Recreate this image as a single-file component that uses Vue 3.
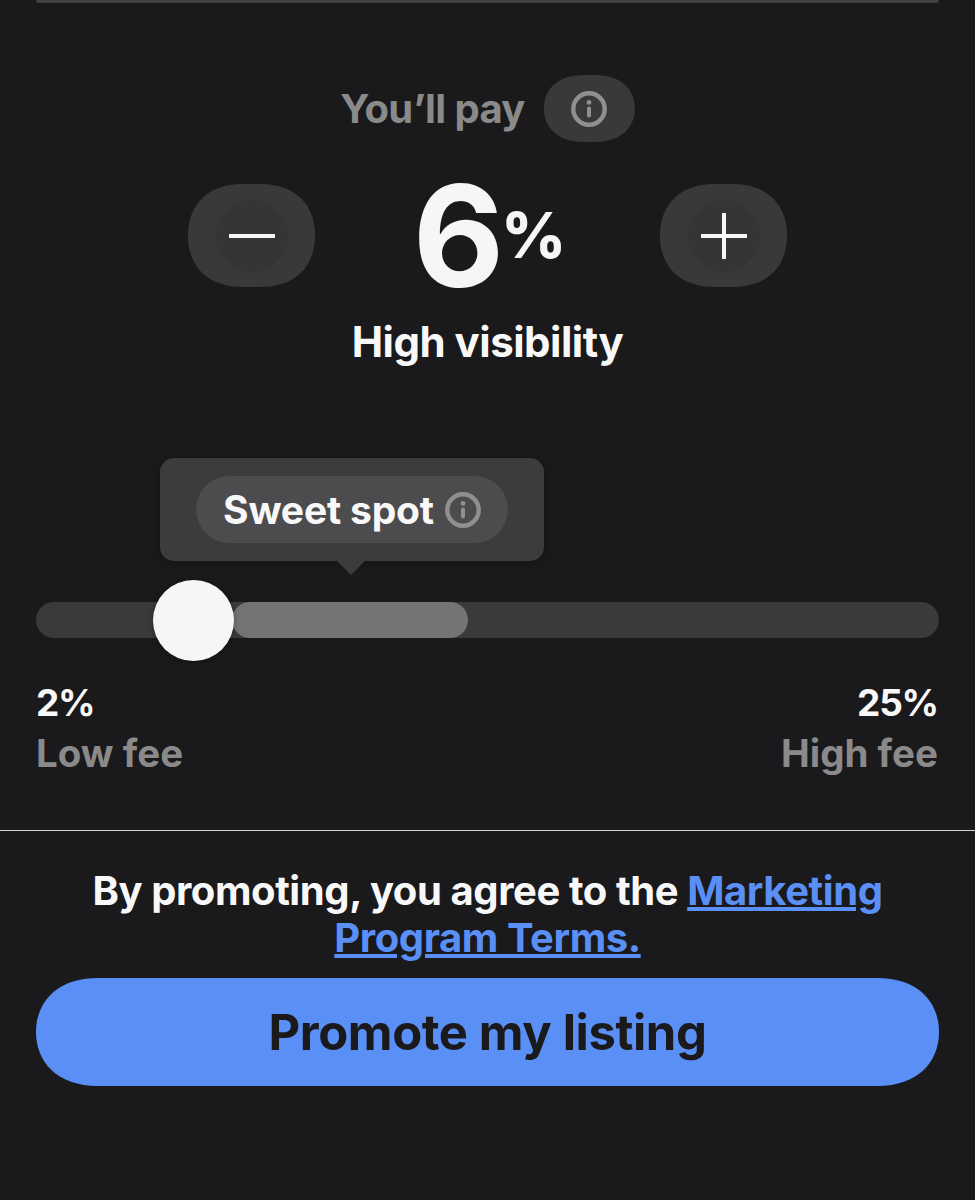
<script setup>
</script>

<template>
  <div class="page">
    <div class="sliver"></div>
    <div class="pay-row">
      <span class="pay-label">You’ll pay</span>
      <span class="info-pill">
        <svg class="info-lg" viewBox="0 0 36 36"><circle cx="18" cy="18" r="15.7" fill="none" stroke="#909090" stroke-width="4.4"/><circle cx="18" cy="11.4" r="2.4" fill="#909090"/><rect x="16" y="15.5" width="4" height="11" rx="2" fill="#909090"/></svg>
      </span>
    </div>
    <div class="stepper">
      <button class="step">
        <span class="step-in">
          <svg viewBox="0 0 46 46" class="step-icon"><path d="M1 23H45" stroke="#f6f6f6" stroke-width="4" stroke-linecap="round"/></svg>
        </span>
      </button>
      <div class="value"><span class="num">6</span><span class="pct">%</span></div>
      <button class="step">
        <span class="step-in">
          <svg viewBox="0 0 46 46" class="step-icon"><path d="M1 23H45M23 1V45" stroke="#f6f6f6" stroke-width="4" stroke-linecap="round"/></svg>
        </span>
      </button>
    </div>
    <div class="visibility">High visibility</div>
    <div class="slider">
      <div class="tooltip">
        <div class="tip-pill">
          <span>Sweet spot</span>
          <svg class="info-sm" viewBox="0 0 36 36"><circle cx="18" cy="18" r="15.7" fill="none" stroke="#909090" stroke-width="4.4"/><circle cx="18" cy="11.4" r="2.4" fill="#909090"/><rect x="16" y="15.5" width="4" height="11" rx="2" fill="#909090"/></svg>
        </div>
        <span class="tip-arrow"></span>
      </div>
      <div class="track">
        <div class="sweet"></div>
        <div class="thumb"></div>
      </div>
    </div>
    <div class="ends">
      <div>
        <div class="end-val">2%</div>
        <div class="end-lab">Low fee</div>
      </div>
      <div class="right">
        <div class="end-val">25%</div>
        <div class="end-lab">High fee</div>
      </div>
    </div>
    <footer class="footer">
      <p class="terms">By promoting, you agree to the <a class="link">Marketing Program Terms.</a></p>
      <button class="cta">Promote my listing</button>
    </footer>
  </div>
</template>

<style>
html, body { margin: 0; background: #1a1a1c; }
</style>

<style scoped>
.page {
  width: 975px;
  height: 1200px;
  overflow: hidden;
  background: #1a1a1c;
  font-family: Inter, "Liberation Sans", sans-serif;
  font-weight: 650;
  color: #f8f8f8;
}
.sliver {
  height: 3px;
  margin: 0 36px;
  background: #404042;
  border-radius: 0 0 12px 12px;
}
.pay-row {
  margin-top: 72px;
  height: 67px;
  display: flex;
  justify-content: center;
  align-items: center;
  gap: 19px;
}
.pay-label {
  font-size: 40px;
  letter-spacing: -0.6px;
  color: #8a8a8a;
}
.info-pill {
  width: 91px;
  height: 67px;
  clip-path: path("M40 0H51C78 0 91 15 91 33.5C91 52 78 67 51 67H40C13 67 0 52 0 33.5C0 15 13 0 40 0Z");
  background: #39393c;
  display: flex;
  align-items: center;
  justify-content: center;
}
.info-lg { width: 36px; height: 36px; }
.stepper {
  margin: 42px 188px 0;
  height: 103px;
  display: flex;
  justify-content: space-between;
  align-items: center;
}
.step {
  width: 127px;
  height: 103px;
  padding: 0;
  border: 0;
  clip-path: path("M55 0H72C109 0 127 22 127 51.5C127 81 109 103 72 103H55C18 103 0 81 0 51.5C0 22 18 0 55 0Z");
  background: #39393c;
  display: flex;
  align-items: center;
  justify-content: center;
}
.step-in {
  width: 72px;
  height: 72px;
  border-radius: 50%;
  background: #353537;
  display: flex;
  align-items: center;
  justify-content: center;
}
.step-icon { width: 46px; height: 46px; }
.value {
  display: flex;
  align-items: flex-start;
  height: 103px;
  margin-left: 2px;
}
.num {
  font-size: 141px;
  font-weight: 700;
  line-height: 103px;
  letter-spacing: -2px;
  color: #f6f6f6;
}
.pct {
  font-size: 63px;
  font-weight: 800;
  line-height: 103px;
  letter-spacing: -2px;
  margin-left: -1px;
  color: #f6f6f6;
}
.visibility {
  margin-top: 31px;
  height: 48px;
  line-height: 48px;
  text-align: center;
  font-size: 42px;
  letter-spacing: -0.5px;
}
.slider {
  position: relative;
  margin: 236px 36px 0;
}
.tooltip {
  position: absolute;
  left: 124px;
  bottom: 77px;
  width: 384px;
  height: 103px;
  background: #3c3c3e;
  border-radius: 14px;
  display: flex;
  align-items: center;
  justify-content: center;
  box-shadow: 0 2px 10px rgba(0, 0, 0, .3);
}
.tip-pill {
  width: 312px;
  height: 67px;
  border-radius: 34px;
  background: #4c4c4f;
  display: flex;
  align-items: center;
  justify-content: center;
  gap: 11px;
  font-size: 39px;
  letter-spacing: -0.2px;
  color: #f8f8f8;
}
.info-sm { width: 36px; height: 36px; }
.tip-arrow {
  position: absolute;
  left: 177px;
  bottom: -14px;
  width: 0;
  height: 0;
  border-left: 14px solid transparent;
  border-right: 14px solid transparent;
  border-top: 14px solid #3c3c3e;
}
.track {
  position: relative;
  height: 36px;
  border-radius: 18px;
  background: #3a3a3b;
}
.sweet {
  position: absolute;
  left: 196px;
  width: 236px;
  top: 0;
  height: 36px;
  border-radius: 18px;
  background: #747473;
}
.thumb {
  position: absolute;
  left: 117px;
  top: -22px;
  width: 81px;
  height: 81px;
  border-radius: 50%;
  background: #f6f6f6;
  box-shadow: 0 1px 6px rgba(0, 0, 0, .3);
}
.ends {
  margin: 40px 37px 0 36px;
  display: flex;
  justify-content: space-between;
  font-size: 38.5px;
}
.right { text-align: right; }
.end-val { height: 50px; line-height: 50px; color: #f8f8f8; letter-spacing: -1.2px; font-size: 37px; }
.end-lab { height: 50px; line-height: 50px; color: #8a8a8a; }
.footer {
  margin-top: 52px;
  border-top: 1px solid #d5d5d5;
  padding: 36px 36px 0;
}
.terms {
  margin: 0 auto 17px;
  width: 820px;
  text-align: center;
  font-size: 40px;
  line-height: 47px;
  letter-spacing: -0.42px;
}
.link { color: #5a8ff5; text-decoration: underline; }
.cta {
  display: block;
  width: 100%;
  height: 108px;
  border: 0;
  clip-path: path("M62 0H841C882 0 903 24 903 54C903 84 882 108 841 108H62C21 108 0 84 0 54C0 24 21 0 62 0Z");
  background: #5a8ff5;
  color: #1a1a1c;
  font-family: inherit;
  font-weight: 650;
  font-size: 49px;
  letter-spacing: -0.4px;
}
</style>
